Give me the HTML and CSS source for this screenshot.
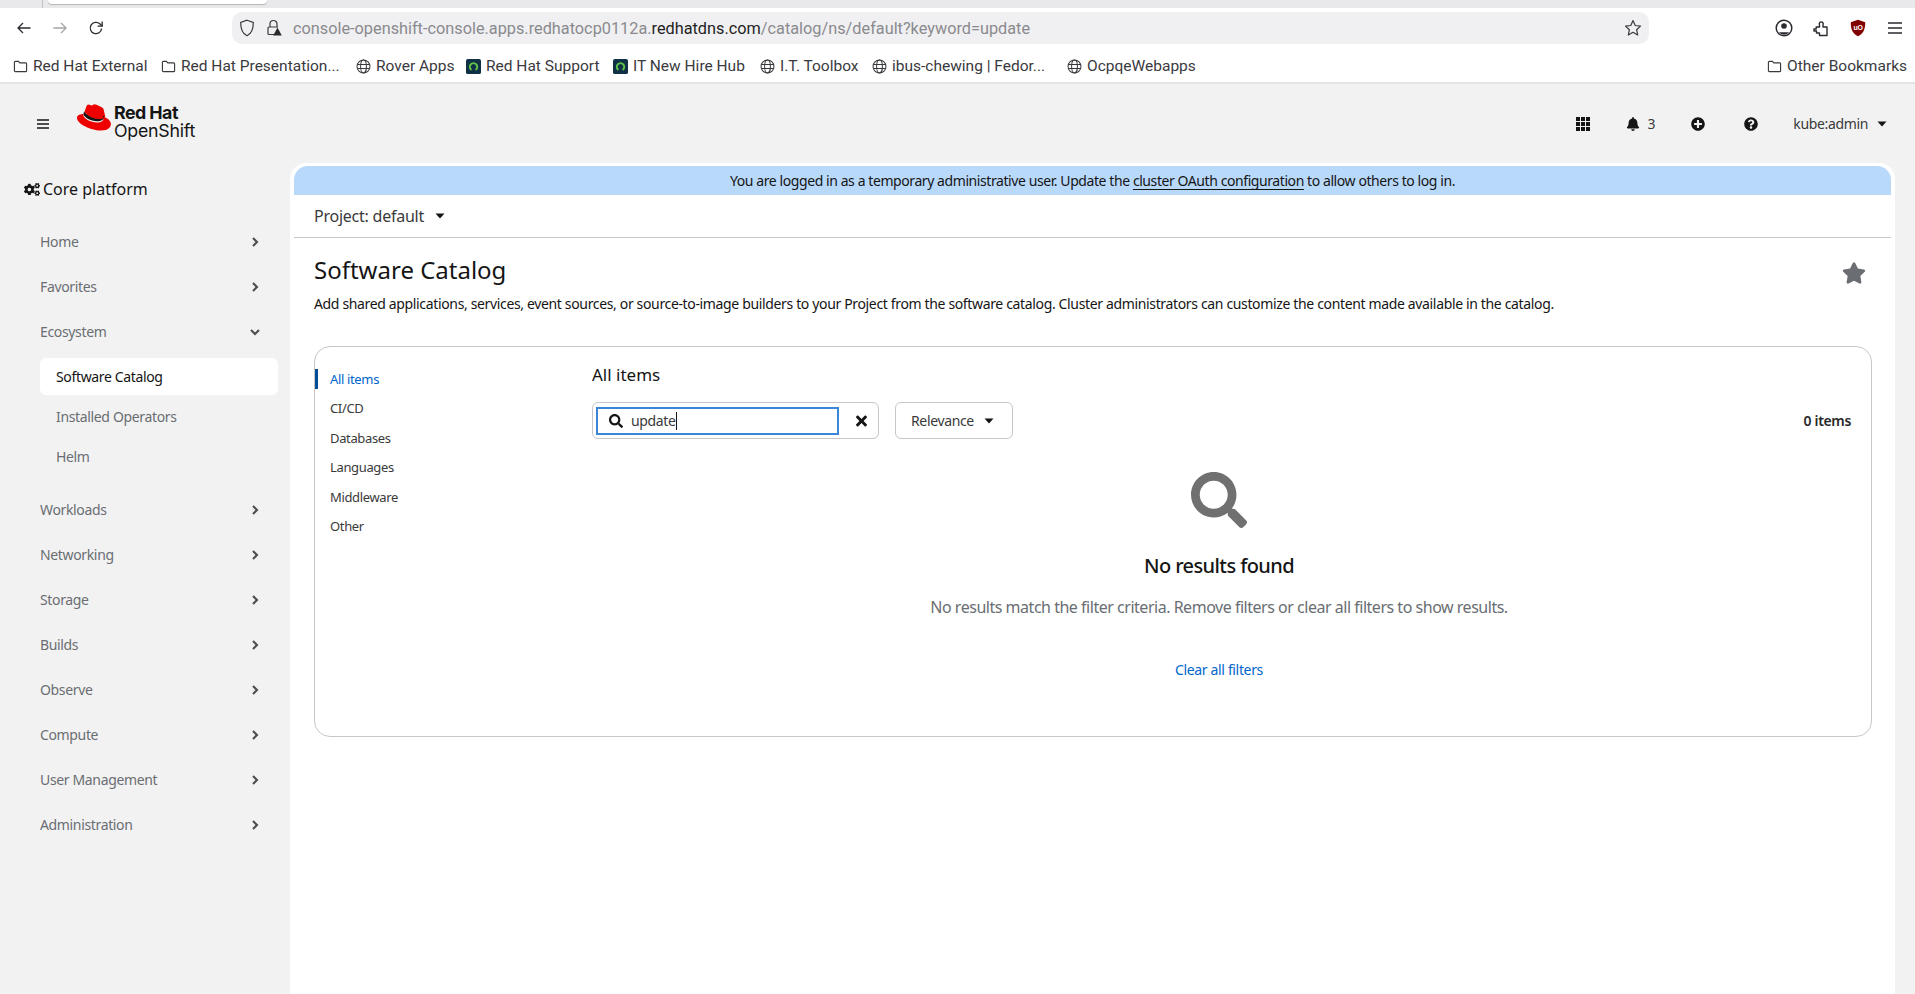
FILE: index.html
```html
<!DOCTYPE html>
<html lang="en">
<head>
<meta charset="utf-8">
<title>Software Catalog</title>
<link rel="stylesheet" href="styles.css">
</head>
<body>
<svg class="defs" aria-hidden="true">
  <symbol id="folder" viewBox="0 0 16 16"><path d="M1.5 3.5a1 1 0 0 1 1-1h3.2l1.6 1.6h6.2a1 1 0 0 1 1 1v7.4a1 1 0 0 1-1 1h-11a1 1 0 0 1-1-1z" fill="none" stroke="#3a3a3e" stroke-width="1.2"/></symbol>
  <symbol id="globe" viewBox="0 0 16 16"><g fill="none" stroke="#3a3a3e" stroke-width="1.1"><circle cx="8" cy="8" r="6.9"/><ellipse cx="8" cy="8" rx="3.1" ry="6.9"/><path d="M1.3 5.8h13.4M1.3 10.2h13.4"/></g></symbol>
  <symbol id="ocp" viewBox="0 0 16 16"><rect width="16" height="16" rx="2" fill="#0f3045"/><path d="M5.3 12.6a5 5 0 1 1 5.4 0l-1-2a2.8 2.8 0 1 0-3.4 0z" fill="#5fc34a"/></symbol>
  <symbol id="search" viewBox="0 0 512 512"><path d="M505 442.7L405.3 343c-4.5-4.5-10.6-7-17-7H372c27.6-35.3 44-79.7 44-128C416 93.1 322.9 0 208 0S0 93.1 0 208s93.1 208 208 208c48.3 0 92.7-16.4 128-44v16.3c0 6.4 2.5 12.5 7 17l99.7 99.7c9.4 9.4 24.6 9.4 33.9 0l28.3-28.3c9.4-9.4 9.4-24.6.1-34zM208 336c-70.7 0-128-57.2-128-128 0-70.7 57.2-128 128-128 70.7 0 128 57.2 128 128 0 70.7-57.2 128-128 128z"/></symbol>
  <symbol id="chev-right" viewBox="0 0 10 12"><path d="M3 2l4 4-4 4" fill="none" stroke="currentColor" stroke-width="2.1"/></symbol>
  <symbol id="chev-down" viewBox="0 0 12 10"><path d="M2 3l4 4 4-4" fill="none" stroke="currentColor" stroke-width="2.1"/></symbol>
  <symbol id="caret" viewBox="0 0 10 6"><path d="M0.5 0.5h9L5 5.5z"/></symbol>
</svg>

<div class="tabstrip"><span class="tabsep"></span><span class="tab"></span></div>

<div class="toolbar">
  <div class="navbtns">
    <svg class="nav-ico" viewBox="0 0 16 16"><path d="M14.5 8H2M7 3L2 8l5 5" fill="none" stroke="#2b2b30" stroke-width="1.3"/></svg>
    <svg class="nav-ico" viewBox="0 0 16 16"><path d="M1.5 8H14M9 3l5 5-5 5" fill="none" stroke="#a4a4a8" stroke-width="1.3"/></svg>
    <svg class="nav-ico" viewBox="0 0 16 16"><path d="M13.6 8.6A5.7 5.7 0 1 1 11.8 3.8L14 6" fill="none" stroke="#2b2b30" stroke-width="1.3"/><path d="M14.2 1.6V6.2H9.6" fill="none" stroke="#2b2b30" stroke-width="1.3"/></svg>
  </div>
  <div class="urlbar">
    <svg class="shield" viewBox="0 0 16 18"><path d="M8 1.2l6.3 2.2c.1 6-1.4 10.8-6.3 13.3C3.100 14.200 1.600 9.400 1.700 3.400z" fill="none" stroke="#3a3a3e" stroke-width="1.2"/></svg>
    <svg class="lock" viewBox="0 0 16 18"><path d="M4 8V5a3.5 3.5 0 0 1 7 0v3M8.5 15.5H3a1 1 0 0 1-1-1V9a1 1 0 0 1 1-1h9" fill="none" stroke="#3a3a3e" stroke-width="1.2"/><path d="M11.5 8.5l4.300 8H7.200z" fill="#2b2b30"/></svg>
    <span class="url"><span class="url-dim">console-openshift-console.apps.redhatocp0112a.</span><span class="url-host">redhatdns.com</span><span class="url-dim">/catalog/ns/default?keyword=update</span></span>
    <svg class="urlstar" viewBox="0 0 18 18"><path d="M9 1.6l2.200 4.900 5.300.6-3.900 3.600 1.100 5.300L9 13.300l-4.700 2.700 1.100-5.300L1.500 7.100l5.300-.6z" fill="none" stroke="#3a3a3e" stroke-width="1.2" stroke-linejoin="round"/></svg>
  </div>
  <div class="extras">
    <svg class="ext-ico" viewBox="0 0 18 18"><circle cx="9" cy="9" r="7.8" fill="none" stroke="#2b2b30" stroke-width="1.5"/><circle cx="9" cy="7" r="2.8" fill="#2b2b30"/><path d="M3.900 13.200h10.200A6.500 6.500 0 0 1 3.900 13.200z" fill="#2b2b30"/></svg>
    <svg class="ext-ico" viewBox="0 0 18 18"><path d="M2 10h2.200V8H7.500V5.800A2 2 0 1 1 11 5.800V8h4v8.500H7.500V14H4.500V12H2z" fill="none" stroke="#2b2b30" stroke-width="1.4" stroke-linejoin="round"/></svg>
    <svg class="ext-ico" viewBox="0 0 18 18"><path d="M9 .8l7.200 2.400c.2 7-1.900 11.400-7.200 14C3.700 14.600 1.600 10.200 1.800 3.200z" fill="#800000"/><text x="9" y="10.800" class="ublogo">uO</text></svg>
    <svg class="ext-ico" viewBox="0 0 18 18"><path d="M2 4h14M2 9h14M2 14h14" stroke="#2b2b30" stroke-width="1.3"/></svg>
  </div>
</div>

<div class="bookmarks">
  <a class="bm bm-w1"><svg class="bm-ico"><use href="#folder"/></svg>Red Hat External</a>
  <a class="bm bm-w2"><svg class="bm-ico"><use href="#folder"/></svg>Red Hat Presentation...</a>
  <a class="bm bm-w3"><svg class="bm-ico"><use href="#globe"/></svg>Rover Apps</a>
  <a class="bm bm-w4"><svg class="bm-ico"><use href="#ocp"/></svg>Red Hat Support</a>
  <a class="bm bm-w5"><svg class="bm-ico"><use href="#ocp"/></svg>IT New Hire Hub</a>
  <a class="bm bm-w6"><svg class="bm-ico"><use href="#globe"/></svg>I.T. Toolbox</a>
  <a class="bm bm-w7"><svg class="bm-ico"><use href="#globe"/></svg>ibus-chewing | Fedor...</a>
  <a class="bm"><svg class="bm-ico"><use href="#globe"/></svg>OcpqeWebapps</a>
  <a class="bm bm-other"><svg class="bm-ico"><use href="#folder"/></svg>Other Bookmarks</a>
</div>

<div class="app">
  <header class="masthead">
    <button class="burger" aria-label="menu"><svg viewBox="0 0 12 10"><path d="M0 1h12M0 5h12M0 9h12" stroke="#151515" stroke-width="1.7"/></svg></button>
    <div class="logo">
      <svg class="hat" viewBox="0 0 34 27"><path d="M22.7 15.4c2.300 0 5.500-.5 5.500-3.100a2.600 2.600 0 0 0-.1-.6l-1.400-5.900c-.3-1.300-.6-1.900-2.900-3.100C22 1.800 18.300.300 17.200.300c-1 0-1.300 1.300-2.500 1.300-1.200 0-2-1-3.100-1-1.100 0-1.800.7-2.300 2.200 0 0-1.500 4.300-1.700 4.900a1.200 1.200 0 0 0 0 .3c0 1.700 6.700 7.400 14.700 7.400z" fill="#e00"/><path d="M28 13.400c.3 1.300.3 1.400.3 1.600 0 2.200-2.500 3.500-5.800 3.500-7.500 0-14.100-4.400-14.100-7.300a3 3 0 0 1 .2-1.200C5.900 10.100 2 10.600 2 14c0 5.600 13.300 12.500 23.800 12.500 8.100 0 10.100-3.600 10.100-6.500 0-2.300-2-4.900-5.600-6.500z" fill="#e00" transform="translate(-2 0)"/><path d="M26 11.500c.3 1.400.4 1.600.4 1.800 0 2.200-2.500 3.500-5.800 3.500-7.500 0-14.100-4.400-14.100-7.300a3 3 0 0 1 .2-1.200l.6-1.500a1.200 1.200 0 0 0 0 .3c0 1.700 6.700 7.400 14.700 7.400 2.100 0 5.300-.4 5.300-3z" fill="#151515" transform="translate(0 0.5)"/></svg>
      <div class="logotext"><span class="lt-rh">Red Hat</span><span class="lt-os">OpenShift</span></div>
    </div>
    <div class="mast-tools">
      <svg class="tool-ico tool-grid" viewBox="0 0 14 14"><path d="M0 0h4v4H0zM5 0h4v4H5zM10 0h4v4h-4zM0 5h4v4H0zM5 5h4v4H5zM10 5h4v4h-4zM0 10h4v4H0zM5 10h4v4H5zM10 10h4v4h-4z"/></svg>
      <span class="bell"><svg class="tool-ico" viewBox="0 0 448 512"><path d="M224 512c35.320 0 63.970-28.650 63.970-64H160.030c0 35.350 28.650 64 63.970 64zm215.390-149.710c-19.320-20.760-55.470-51.990-55.470-154.290 0-77.700-54.480-139.900-127.940-155.160V32c0-17.670-14.320-32-31.980-32s-31.980 14.330-31.980 32v20.840C118.560 68.100 64.080 130.300 64.080 208c0 102.300-36.150 133.530-55.470 154.290-6 6.450-8.660 14.160-8.610 21.710.11 16.400 12.980 32 32.100 32h383.800c19.120 0 32-15.600 32.100-32 .05-7.550-2.610-15.270-8.610-21.710z"/></svg><span>3</span></span>
      <svg class="tool-ico tool-plus" viewBox="0 0 512 512"><path d="M256 8C119 8 8 119 8 256s111 248 248 248 248-111 248-248S393 8 256 8zm144 276c0 6.600-5.400 12-12 12h-92v92c0 6.600-5.400 12-12 12h-56c-6.600 0-12-5.400-12-12v-92h-92c-6.600 0-12-5.400-12-12v-56c0-6.600 5.400-12 12-12h92v-92c0-6.600 5.400-12 12-12h56c6.600 0 12 5.400 12 12v92h92c6.600 0 12 5.400 12 12v56z"/></svg>
      <svg class="tool-ico tool-help" viewBox="0 0 512 512"><path d="M504 256c0 136.997-111.043 248-248 248S8 392.997 8 256C8 119.083 119.043 8 256 8s248 111.083 248 248zM262.655 90c-54.497 0-89.255 22.957-116.549 63.758-3.536 5.286-2.353 12.415 2.715 16.258l34.699 26.310c5.205 3.947 12.621 3.008 16.665-2.122 17.864-22.658 30.113-35.797 57.303-35.797 20.429 0 45.698 13.148 45.698 32.958 0 14.976-12.363 22.667-32.534 33.976C247.128 238.528 216 254.941 216 296v4c0 6.627 5.373 12 12 12h56c6.627 0 12-5.373 12-12v-1.333c0-28.462 83.186-29.647 83.186-106.667 0-58.002-60.165-102-116.531-102zM256 338c-25.365 0-46 20.635-46 46 0 25.364 20.635 46 46 46s46-20.636 46-46c0-25.365-20.635-46-46-46z"/></svg>
      <span class="user">kube:admin<svg class="caret"><use href="#caret"/></svg></span>
    </div>
  </header>

  <div class="body">
    <nav class="side">
      <div class="perspective">
        <svg class="cogs" viewBox="0 0 640 512"><path d="M512.100 191l-8.200 14.300c-3 5.300-9.400 7.500-15.100 5.400-11.800-4.400-22.600-10.700-32.100-18.600-4.600-3.800-5.800-10.500-2.800-15.700l8.200-14.300c-6.900-8-12.300-17.300-15.900-27.400h-16.500c-6 0-11.200-4.300-12.200-10.300-2-12-2.100-24.600 0-37.100 1-6 6.200-10.400 12.200-10.400h16.500c3.600-10.100 9-19.400 15.900-27.400l-8.200-14.300c-3-5.200-1.900-11.900 2.800-15.700 9.500-7.900 20.400-14.200 32.100-18.600 5.700-2.100 12.100.1 15.100 5.400l8.200 14.300c10.500-1.900 21.200-1.900 31.700 0L552 6.300c3-5.300 9.400-7.500 15.100-5.400 11.800 4.400 22.600 10.700 32.100 18.600 4.600 3.800 5.800 10.500 2.800 15.700l-8.200 14.300c6.900 8 12.300 17.300 15.900 27.400h16.500c6 0 11.200 4.300 12.200 10.300 2 12 2.100 24.600 0 37.100-1 6-6.200 10.400-12.200 10.400h-16.500c-3.600 10.100-9 19.400-15.900 27.400l8.200 14.300c3 5.200 1.900 11.900-2.800 15.700-9.500 7.900-20.400 14.200-32.100 18.600-5.700 2.100-12.100-.1-15.100-5.400l-8.200-14.300c-10.400 1.900-21.200 1.900-31.700 0zm-10.500-58.800c38.500 29.600 82.400-14.300 52.800-52.800-38.500-29.700-82.400 14.300-52.800 52.800zM386.300 286.100l33.700 16.800c10.100 5.800 14.500 18.100 10.500 29.100-8.900 24.200-26.400 46.400-42.600 65.800-7.400 8.900-20.200 11.100-30.300 5.300l-29.100-16.800c-16 13.700-34.600 24.600-54.900 31.700v33.600c0 11.600-8.300 21.600-19.700 23.600-24.600 4.200-50.400 4.400-75.900 0-11.500-2-20-11.900-20-23.600V418c-20.300-7.200-38.900-18-54.900-31.700L74 403c-10 5.800-22.900 3.600-30.300-5.300-16.200-19.400-33.300-41.600-42.200-65.700-4-10.900.4-23.200 10.500-29.100l33.300-16.800c-3.900-20.900-3.900-42.400 0-63.400L12 205.800c-10.100-5.800-14.600-18.100-10.500-29 8.900-24.200 26-46.400 42.200-65.800 7.400-8.900 20.200-11.100 30.300-5.300l29.100 16.800c16-13.700 34.600-24.600 54.900-31.700V57.100c0-11.500 8.200-21.500 19.600-23.500 24.600-4.200 50.500-4.400 76-.1 11.500 2 20 11.900 20 23.600v33.600c20.300 7.200 38.900 18 54.900 31.700l29.100-16.800c10-5.800 22.900-3.600 30.300 5.300 16.200 19.400 33.200 41.600 42.100 65.800 4 10.900.1 23.200-10 29.100l-33.700 16.800c3.900 21 3.900 42.500 0 63.500zm-117.600 21.100c59.200-77-28.700-164.900-105.700-105.700-59.200 77 28.700 164.900 105.700 105.700zm243.400 182.700l-8.200 14.300c-3 5.300-9.400 7.500-15.100 5.400-11.800-4.400-22.600-10.700-32.100-18.600-4.600-3.800-5.800-10.500-2.800-15.700l8.200-14.300c-6.900-8-12.300-17.300-15.900-27.400h-16.500c-6 0-11.200-4.300-12.200-10.300-2-12-2.100-24.600 0-37.100 1-6 6.200-10.400 12.200-10.400h16.500c3.600-10.100 9-19.400 15.900-27.400l-8.200-14.300c-3-5.200-1.900-11.900 2.800-15.700 9.500-7.900 20.400-14.200 32.100-18.600 5.700-2.100 12.100.1 15.100 5.400l8.200 14.300c10.500-1.900 21.200-1.900 31.700 0l8.200-14.300c3-5.300 9.400-7.500 15.100-5.400 11.800 4.400 22.600 10.700 32.100 18.600 4.600 3.800 5.800 10.500 2.800 15.700l-8.200 14.300c6.900 8 12.300 17.300 15.900 27.400h16.500c6 0 11.200 4.300 12.200 10.300 2 12 2.100 24.600 0 37.100-1 6-6.200 10.400-12.200 10.400h-16.500c-3.600 10.100-9 19.400-15.900 27.400l8.200 14.300c3 5.200 1.900 11.900-2.800 15.700-9.500 7.900-20.400 14.200-32.100 18.600-5.700 2.100-12.100-.1-15.100-5.400l-8.200-14.300c-10.400 1.900-21.200 1.900-31.700 0zM501.600 431c38.500 29.600 82.400-14.300 52.800-52.800-38.500-29.600-82.400 14.300-52.800 52.800z"/></svg>
        Core platform
      </div>
      <ul class="nav">
        <li class="nav-item">Home<svg class="chev"><use href="#chev-right"/></svg></li>
        <li class="nav-item">Favorites<svg class="chev"><use href="#chev-right"/></svg></li>
        <li class="nav-item">Ecosystem<svg class="chev chev-d"><use href="#chev-down"/></svg></li>
        <li class="sub-list">
          <a class="sub-item sub-current">Software Catalog</a>
          <a class="sub-item">Installed Operators</a>
          <a class="sub-item">Helm</a>
        </li>
        <li class="nav-item">Workloads<svg class="chev"><use href="#chev-right"/></svg></li>
        <li class="nav-item">Networking<svg class="chev"><use href="#chev-right"/></svg></li>
        <li class="nav-item">Storage<svg class="chev"><use href="#chev-right"/></svg></li>
        <li class="nav-item">Builds<svg class="chev"><use href="#chev-right"/></svg></li>
        <li class="nav-item">Observe<svg class="chev"><use href="#chev-right"/></svg></li>
        <li class="nav-item">Compute<svg class="chev"><use href="#chev-right"/></svg></li>
        <li class="nav-item">User Management<svg class="chev"><use href="#chev-right"/></svg></li>
        <li class="nav-item">Administration<svg class="chev"><use href="#chev-right"/></svg></li>
      </ul>
    </nav>

    <main class="panel">
      <div class="banner">You are logged in as a temporary administrative user. Update the <a class="banner-link">cluster OAuth configuration</a> to allow others to log in.</div>
      <div class="project">Project: default<svg class="caret"><use href="#caret"/></svg></div>
      <div class="content">
        <div class="title-row">
          <h1 class="title">Software Catalog</h1>
          <svg class="fav" viewBox="0 0 576 512"><path d="M259.300 17.800L194 150.200 47.900 171.500c-26.200 3.800-36.700 36.100-17.700 54.600l105.700 103-25 145.500c-4.500 26.300 23.200 46 46.400 33.700L288 439.600l130.700 68.700c23.200 12.200 50.900-7.400 46.400-33.700l-25-145.500 105.700-103c19-18.500 8.500-50.800-17.700-54.600L382 150.200 316.700 17.800c-11.700-23.600-45.600-23.900-57.400 0z"/></svg>
        </div>
        <p class="desc">Add shared applications, services, event sources, or source-to-image builders to your Project from the software catalog. Cluster administrators can customize the content made available in the catalog.</p>
        <section class="card">
          <ul class="cats">
            <li class="cat cat-active">All items</li>
            <li class="cat">CI/CD</li>
            <li class="cat">Databases</li>
            <li class="cat">Languages</li>
            <li class="cat">Middleware</li>
            <li class="cat">Other</li>
          </ul>
          <div class="results">
            <h2 class="results-title">All items</h2>
            <div class="filters">
              <div class="searchgroup">
                <div class="searchinput"><svg class="search-ico"><use href="#search"/></svg><span class="typed">update</span></div>
                <svg class="clear-ico" viewBox="0 0 352 512"><path d="M242.720 256l100.070-100.070c12.280-12.280 12.280-32.190 0-44.480l-22.240-22.240c-12.280-12.280-32.190-12.280-44.480 0L176 189.280 75.930 89.210c-12.280-12.280-32.190-12.280-44.480 0L9.210 111.450c-12.280 12.280-12.280 32.190 0 44.480L109.280 256 9.210 356.070c-12.280 12.280-12.280 32.190 0 44.480l22.240 22.240c12.280 12.280 32.200 12.280 44.480 0L176 322.720l100.070 100.070c12.280 12.280 32.200 12.280 44.480 0l22.240-22.240c12.280-12.280 12.280-32.190 0-44.480L242.720 256z"/></svg>
              </div>
              <div class="sort">Relevance<svg class="caret"><use href="#caret"/></svg></div>
              <div class="count">0 items</div>
            </div>
            <div class="empty">
              <svg class="empty-ico"><use href="#search"/></svg>
              <h3 class="empty-title">No results found</h3>
              <p class="empty-desc">No results match the filter criteria. Remove filters or clear all filters to show results.</p>
              <a class="empty-link">Clear all filters</a>
            </div>
          </div>
        </section>
      </div>
    </main>
  </div>
</div>
</body>
</html>
```

FILE: styles.css
```css
* { box-sizing: border-box; }
html, body { margin: 0; padding: 0; height: 994px; overflow: hidden; }
body { font-family: "Noto Sans", sans-serif; font-size: 14px; letter-spacing: -0.025em; color: #151515; background: #f2f2f2; display: flex; flex-direction: column; }
h1, h2, h3, p, ul { margin: 0; padding: 0; list-style: none; font-weight: 400; }
.defs { display: none; }

.tabstrip { height: 8px; background: #e9e9ec; flex: none; display: flex; }
.tabsep { width: 1px; height: 8px; margin-left: 42px; background: #c4c4c8; }
.tab { width: 219px; height: 4px; margin-left: 5px; background: #fff; border-radius: 0 0 6px 6px; box-shadow: 0 1px 1px #b5b5b8; }

.toolbar { height: 36px; background: #fff; display: flex; align-items: flex-start; flex: none; padding-top: 4px; }
.navbtns { width: 232px; display: flex; align-items: center; height: 32px; gap: 20px; padding-left: 16px; }
.nav-ico { width: 16px; height: 16px; }
.urlbar { width: 1417px; height: 32px; background: #f0f0f2; border-radius: 10px; display: flex; align-items: center; padding-left: 8px; padding-right: 7px; }
.shield { width: 16px; height: 18px; margin-left: -1px; }
.lock { width: 16px; height: 18px; margin-left: 11px; }
.url { margin-left: 11px; font-family: Roboto, sans-serif; font-size: 16.3px; letter-spacing: 0; flex: 1; white-space: nowrap; }
.url-dim { color: #8a8a8e; }
.url-host { color: #1f1f23; }
.urlstar { width: 18px; height: 18px; }
.extras { flex: 1; display: flex; align-items: center; height: 32px; padding-left: 126px; gap: 19px; }
.ext-ico { width: 18px; height: 18px; }
.ublogo { fill: #fff; font: 700 7px "Liberation Sans", sans-serif; text-anchor: middle; }

.bookmarks { height: 40px; flex: none; background: #fff; border-bottom: 2px solid #e4e4e6; display: flex; align-items: center; padding: 6px 0 0 13px; font-family: Roboto, sans-serif; font-size: 15.5px; letter-spacing: 0; color: #3a3a3e; white-space: nowrap; }
.bm { display: flex; align-items: center; gap: 5px; }
.bm-ico { width: 15px; height: 15px; flex: none; }
.bm-w1 { width: 148px; }
.bm-w2 { width: 195px; }
.bm-w3 { width: 110px; }
.bm-w4 { width: 147px; }
.bm-w5 { width: 147px; }
.bm-w6 { width: 112px; }
.bm-w7 { width: 195px; }
.bm-other { margin-left: auto; margin-right: 8px; }

.app { flex: 1; display: flex; flex-direction: column; min-height: 0; }
.masthead { height: 79px; flex: none; display: flex; align-items: center; position: relative; }
.burger { border: 0; background: none; padding: 0; width: 12px; height: 10px; margin-left: 37px; display: flex; }
.burger svg { width: 12px; height: 10px; }
.logo { display: flex; margin-left: 28px; align-items: flex-start; margin-top: -1px; }
.hat { width: 34px; height: 27px; margin-top: -2px; }
.logotext { display: flex; flex-direction: column; margin-left: 3px; line-height: 18px; font-family: Inter, sans-serif; font-size: 17.8px; margin-top: -2px; }
.lt-rh { font-weight: 700; letter-spacing: -0.030em; }
.lt-os { letter-spacing: -0.015em; }
.mast-tools { margin-left: auto; display: flex; align-items: center; height: 20px; padding-right: 28px; }
.tool-ico { width: 14px; height: 14px; fill: #151515; flex: none; }
.tool-grid { margin-right: 36px; }
.bell { display: flex; align-items: center; gap: 8px; color: #3a3a3a; margin-right: 36px; }
.tool-plus { margin-right: 39px; }
.tool-help { margin-right: 35px; }
.user { display: flex; align-items: center; color: #3a3a3a; }
.caret { width: 10px; height: 6px; fill: #151515; flex: none; }
.user .caret { margin-left: 9px; }

.body { flex: 1; display: flex; min-height: 0; }
.side { width: 290px; flex: none; }
.perspective { display: flex; align-items: center; height: 24px; margin-top: 14px; padding-left: 24px; font-size: 16px; letter-spacing: 0; gap: 3px; color: #151515; }
.cogs { width: 16px; height: 13px; fill: #151515; }
.nav { margin-top: 22px; padding-left: 40px; width: 278px; font-size: 14px; color: #6a6e73; }
.nav-item { height: 37px; margin-bottom: 8px; display: flex; align-items: center; justify-content: space-between; padding-right: 18.5px; }
.chev { width: 10px; height: 12px; color: #4d4d4d; }
.chev-d { width: 12px; height: 10px; margin-right: -1px; }
.sub-list { display: flex; flex-direction: column; margin-top: 1px; margin-bottom: 16px; gap: 3px; }
.sub-item { height: 37px; padding-left: 16px; display: flex; align-items: center; border-radius: 6px; }
.sub-current { background: #fff; color: #151515; }

.panel { width: 1605px; background: #fff; border-radius: 16px 16px 0 0; padding: 3px 4px 0; display: flex; flex-direction: column; }
.banner { height: 29px; background: #b9d9fb; border-radius: 14px 14px 0 0; text-align: center; line-height: 29px; font-size: 14px; letter-spacing: -0.030em; flex: none; }
.banner-link { text-decoration: underline; text-underline-offset: 3px; }
.project { height: 43px; border-bottom: 1px solid #c7c7c7; display: flex; align-items: center; padding-left: 20px; font-size: 16px; letter-spacing: -0.015em; color: #3a3a3a; flex: none; }
.project .caret { margin-left: 11px; }
.content { padding: 0 19px 0 20px; }
.title-row { display: flex; align-items: center; justify-content: space-between; padding-top: 13px; height: 50px; padding-right: 7px; }
.title { font-size: 24px; line-height: 36px; letter-spacing: 0; }
.fav { width: 24px; height: 22px; fill: #6a6e73; margin-top: 6px; margin-right: -1px; }
.desc { margin-top: 5px; font-size: 14px; line-height: 21px; }
.card { margin-top: 32px; height: 391px; border: 1px solid #c7c7c7; border-radius: 16px; display: flex; }
.cats { width: 277px; padding-top: 22px; flex: none; }
.cat { height: 20px; margin-bottom: 9.4px; padding-left: 15px; line-height: 20px; color: #3a3a3a; font-size: 13px; }
.cat-active { color: #0066cc; border-left: 3px solid #004d99; padding-left: 12px; }
.results { flex: 1; padding-right: 20px; }
.results-title { font-size: 17px; line-height: 24px; margin-top: 16px; letter-spacing: 0; }
.filters { display: flex; align-items: center; margin-top: 15px; height: 37px; }
.searchgroup { width: 287px; height: 37px; border: 1px solid #c7c7c7; border-radius: 6px; display: flex; align-items: center; padding-left: 3px; }
.searchinput { width: 243px; height: 28px; border: 2px solid #3a86d8; display: flex; align-items: center; padding-left: 11px; }
.search-ico { width: 14px; height: 14px; fill: #151515; }
.typed { margin-left: 8px; border-right: 1px solid #151515; line-height: 18px; color: #3a3a3a; }
.clear-ico { width: 11px; height: 16px; margin-left: 17px; fill: #151515; }
.sort { width: 118px; height: 37px; margin-left: 16px; border: 1px solid #c7c7c7; border-radius: 6px; display: flex; align-items: center; padding-left: 15px; color: #3a3a3a; }
.sort .caret { margin-left: auto; margin-right: 18px; }
.count { margin-left: auto; font-weight: 600; color: #292929; }
.empty { display: flex; flex-direction: column; align-items: center; margin-top: 33px; margin-left: -5px; }
.empty-ico { width: 56px; height: 56px; fill: #707070; }
.empty-title { font-size: 20px; line-height: 30px; margin-top: 23px; font-weight: 500; letter-spacing: -0.030em; }
.empty-desc { font-size: 16px; line-height: 24px; margin-top: 14px; letter-spacing: -0.030em; color: #6a6e73; }
.empty-link { margin-top: 40px; color: #0066cc; font-size: 14px; line-height: 21px; }
```
